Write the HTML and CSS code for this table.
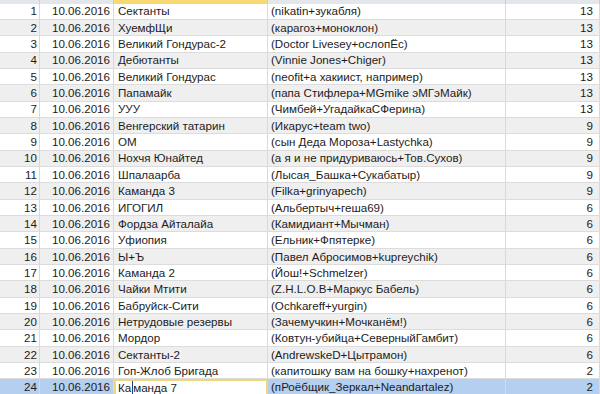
FILE: index.html
```html
<!DOCTYPE html>
<html lang="ru">
<head>
<meta charset="utf-8">
<title>Результаты</title>
<link rel="stylesheet" href="styles.css">
</head>
<body>
<div class="sheet">
  <div class="hdr"></div><div class="hdr"></div><div class="hdr hdr-active"></div><div class="hdr"></div><div class="hdr"></div>

  <div class="c n">1</div><div class="c d">10.06.2016</div><div class="c t">Сектанты</div><div class="c p">(nikatin+зукабля)</div><div class="c s">13</div>
  <div class="c n e">2</div><div class="c d e">10.06.2016</div><div class="c t e">ХуемфЩи</div><div class="c p e">(карагоз+моноклон)</div><div class="c s e">13</div>
  <div class="c n">3</div><div class="c d">10.06.2016</div><div class="c t">Великий Гондурас-2</div><div class="c p">(Doctor Livesey+ослопЁс)</div><div class="c s">13</div>
  <div class="c n e">4</div><div class="c d e">10.06.2016</div><div class="c t e">Дебютанты</div><div class="c p e">(Vinnie Jones+Chiger)</div><div class="c s e">13</div>
  <div class="c n">5</div><div class="c d">10.06.2016</div><div class="c t">Великий Гондурас</div><div class="c p">(neofit+а хакиист, например)</div><div class="c s">13</div>
  <div class="c n e">6</div><div class="c d e">10.06.2016</div><div class="c t e">Папамайк</div><div class="c p e">(папа Стифлера+MGmike эМГэМайк)</div><div class="c s e">13</div>
  <div class="c n">7</div><div class="c d">10.06.2016</div><div class="c t">УУУ</div><div class="c p">(Чимбей+УгадайкаСФерина)</div><div class="c s">13</div>
  <div class="c n e">8</div><div class="c d e">10.06.2016</div><div class="c t e">Венгерский татарин</div><div class="c p e">(Икарус+team two)</div><div class="c s e">9</div>
  <div class="c n">9</div><div class="c d">10.06.2016</div><div class="c t">ОМ</div><div class="c p">(сын Деда Мороза+Lastychka)</div><div class="c s">9</div>
  <div class="c n e">10</div><div class="c d e">10.06.2016</div><div class="c t e">Нохчя Юнайтед</div><div class="c p e">(а я и не придуриваюсь+Тов.Сухов)</div><div class="c s e">9</div>
  <div class="c n">11</div><div class="c d">10.06.2016</div><div class="c t">Шпалаарба</div><div class="c p">(Лысая_Башка+Сукабатыр)</div><div class="c s">9</div>
  <div class="c n e">12</div><div class="c d e">10.06.2016</div><div class="c t e">Каманда 3</div><div class="c p e">(Filka+grinyapech)</div><div class="c s e">9</div>
  <div class="c n">13</div><div class="c d">10.06.2016</div><div class="c t">ИГОГИЛ</div><div class="c p">(Альбертыч+геша69)</div><div class="c s">6</div>
  <div class="c n e">14</div><div class="c d e">10.06.2016</div><div class="c t e">Фордза Айталайа</div><div class="c p e">(Камидиант+Мычман)</div><div class="c s e">6</div>
  <div class="c n">15</div><div class="c d">10.06.2016</div><div class="c t">Уфиопия</div><div class="c p">(Ельник+Фпятерке)</div><div class="c s">6</div>
  <div class="c n e">16</div><div class="c d e">10.06.2016</div><div class="c t e">Ы+Ъ</div><div class="c p e">(Павел Абросимов+kupreychik)</div><div class="c s e">6</div>
  <div class="c n">17</div><div class="c d">10.06.2016</div><div class="c t">Каманда 2</div><div class="c p">(Йош!+Schmelzer)</div><div class="c s">6</div>
  <div class="c n e">18</div><div class="c d e">10.06.2016</div><div class="c t e">Чайки Мтити</div><div class="c p e">(Z.H.L.O.B+Маркус Бабель)</div><div class="c s e">6</div>
  <div class="c n">19</div><div class="c d">10.06.2016</div><div class="c t">Бабруйск-Сити</div><div class="c p">(Ochkareff+yurgin)</div><div class="c s">6</div>
  <div class="c n e">20</div><div class="c d e">10.06.2016</div><div class="c t e">Нетрудовые резервы</div><div class="c p e">(Зачемучкин+Мочканём!)</div><div class="c s e">6</div>
  <div class="c n">21</div><div class="c d">10.06.2016</div><div class="c t">Мордор</div><div class="c p">(Ковтун-убийца+СеверныйГамбит)</div><div class="c s">6</div>
  <div class="c n e">22</div><div class="c d e">10.06.2016</div><div class="c t e">Сектанты-2</div><div class="c p e">(AndrewskeD+Цытрамон)</div><div class="c s e">6</div>
  <div class="c n">23</div><div class="c d">10.06.2016</div><div class="c t">Гоп-Жлоб Бригада</div><div class="c p">(капитошку вам на бошку+нахренот)</div><div class="c s">2</div>
  <div class="c n sel">24</div><div class="c d sel">10.06.2016</div><div class="c t active">Ка<span class="caret"></span>манда 7</div><div class="c p sel">(пРоёбщик_Зеркал+Neandartalez)</div><div class="c s sel">2</div>
</div>
</body>
</html>
```
FILE: styles.css
```css
html, body {
  margin: 0;
  padding: 0;
  background: #ffffff;
}
body {
  width: 600px;
  height: 394px;
  overflow: hidden;
}
.sheet {
  display: grid;
  grid-template-columns: 40px 74px 154px 238px 94px;
  grid-template-rows: 3.5px;
  grid-auto-rows: 16.35px;
  font-family: "Liberation Sans", Arial, sans-serif;
  font-size: 11.6px;
  color: #1c1c1c;
}
.hdr {
  background: #e3e6ea;
  border-right: 1px solid #c9ced6;
}
.hdr-active {
  background: #f7d873;
}
.c {
  display: flex;
  align-items: center;
  white-space: nowrap;
  overflow: hidden;
  border-right: 1px solid #d5d9e0;
  border-bottom: 1px solid #dcdcdc;
  box-sizing: border-box;
  background: #ffffff;
  line-height: 1;
}
.c.e {
  background: #efefef;
}
.n, .d, .s {
  justify-content: flex-end;
}
.n { padding-right: 2px; }
.d { padding-right: 3px; }
.s { padding-right: 6px; }
.t { padding-left: 4px; }
.p { padding-left: 3px; }
.c.sel {
  background: #b4cfef;
}
.c.active {
  background: #ffffff;
  border: 2px solid #f0d47e;
  padding-left: 2px;
}
.caret {
  display: inline-block;
  width: 1px;
  height: 13px;
  background: #1c3f8f;
  margin: 0 0.5px;
}
```
